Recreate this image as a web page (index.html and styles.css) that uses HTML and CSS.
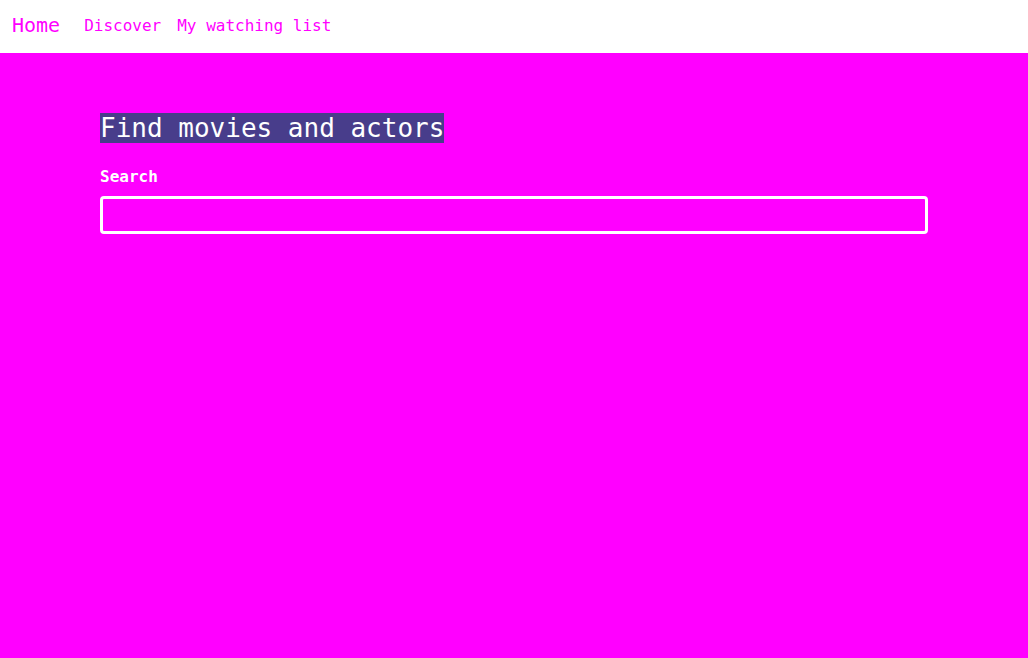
FILE: index.html
```html
<!DOCTYPE html>
<html>
<head>
<meta charset="utf-8">
<link rel="stylesheet" href="styles.css">
</head>
<body>
<header class="topbar">
  <a class="nav-home" href="#">Home</a>
  <nav class="nav-links">
    <a href="#">Discover</a>
    <a href="#">My watching list</a>
  </nav>
</header>
<main class="content">
  <h1 class="title"><span>Find movies and actors</span></h1>
  <label class="label" for="q">Search</label>
  <input class="search" id="q" type="text">
</main>
</body>
</html>
```
FILE: styles.css
```css
html, body {
  margin: 0;
  padding: 0;
  height: 100%;
}
body {
  background: #ff00ff;
  font-family: "DejaVu Sans Mono", monospace;
  color: #ffffff;
}
.topbar {
  background: #ffffff;
  height: 53px;
  display: flex;
  align-items: center;
  padding: 0 12px 4px;
  gap: 24px;
  box-sizing: border-box;
}
.topbar a {
  color: #ff00ff;
  text-decoration: none;
}
.nav-home {
  font-size: 20px;
}
.nav-links {
  display: flex;
  gap: 16px;
  font-size: 16px;
  padding-top: 1px;
}
.content {
  padding: 60px 100px 0;
  display: flex;
  flex-direction: column;
}
.title {
  margin: 0;
  font-size: 26px;
  font-weight: normal;
  line-height: 30px;
}
.title span {
  background: #483d8b;
}
.label {
  font-size: 16px;
  font-weight: bold;
  margin-top: 24px;
  line-height: 20px;
}
.search {
  margin-top: 9px;
  height: 38px;
  box-sizing: border-box;
  border: 3px solid #ffffff;
  border-radius: 4px;
  background: transparent;
  width: 100%;
  outline: none;
  font-family: "DejaVu Sans Mono", monospace;
  font-size: 16px;
  color: #ffffff;
}
```
